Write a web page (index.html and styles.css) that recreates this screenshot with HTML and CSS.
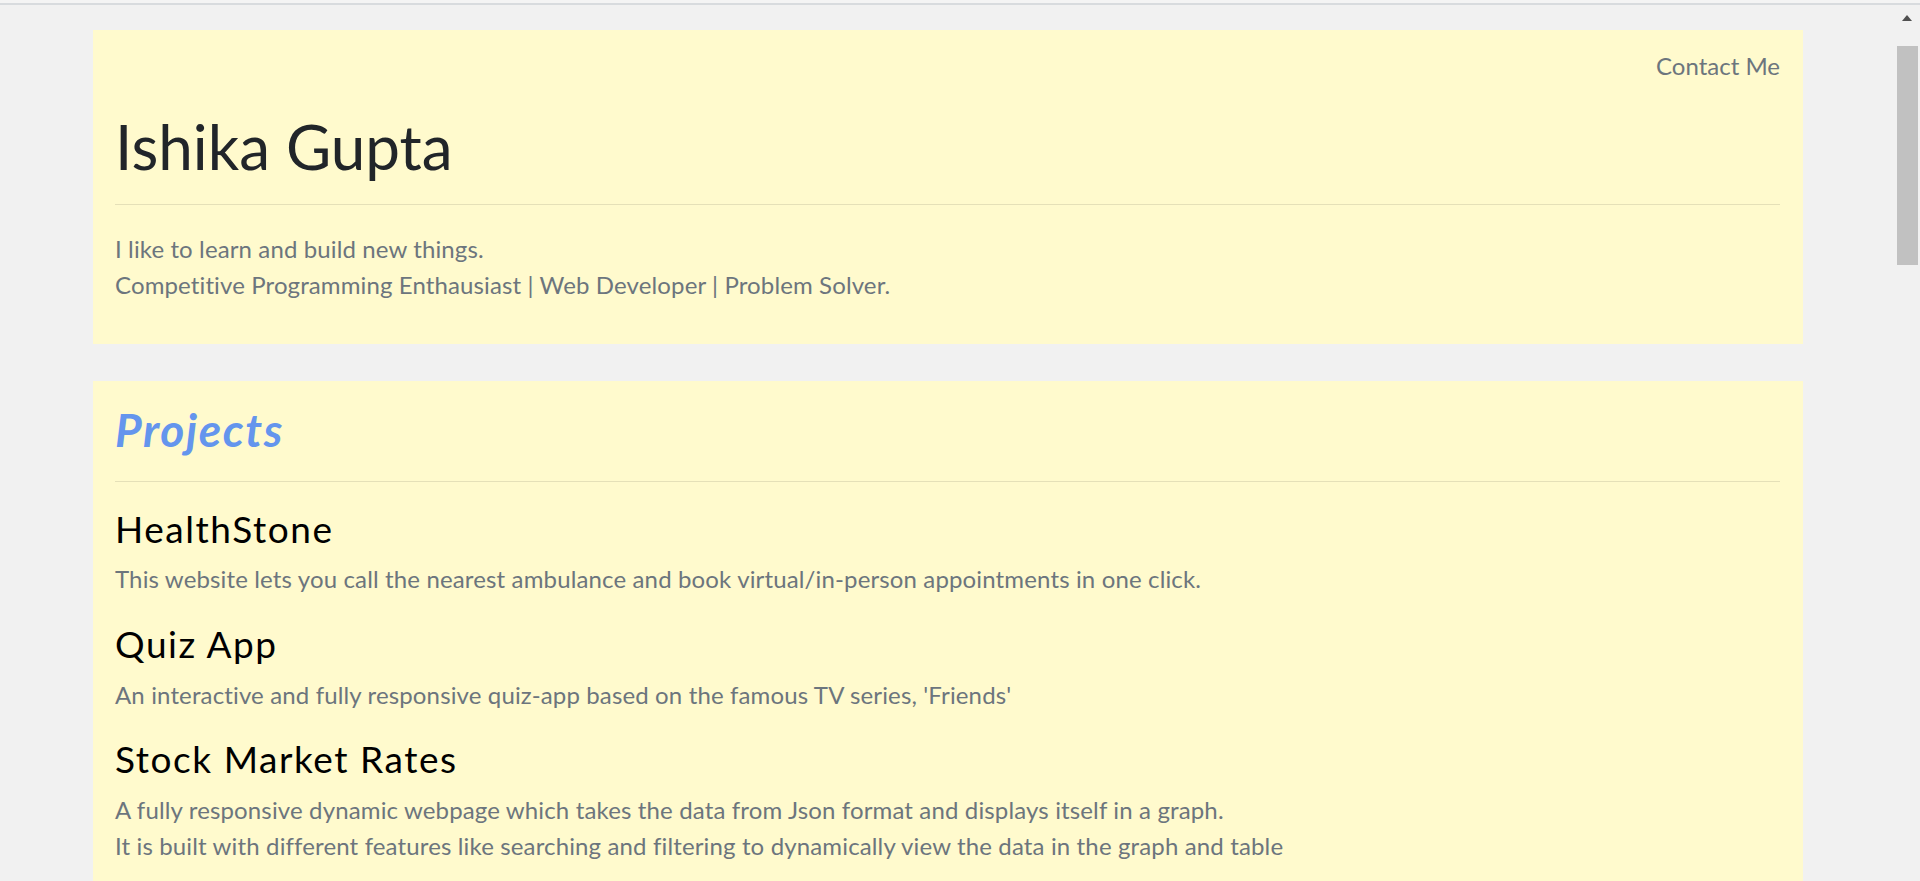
FILE: index.html
```html
<!DOCTYPE html>
<html lang="en">
<head>
<meta charset="utf-8">
<title>Ishika Gupta</title>
<link rel="stylesheet" href="styles.css">
</head>
<body>
<div class="topline"></div>
<main class="page">
  <header class="card intro">
    <nav class="nav"><a class="nav-link" href="#contact">Contact Me</a></nav>
    <h1 class="name">Ishika Gupta</h1>
    <hr class="rule">
    <p class="lead">I like to learn and build new things.<br>Competitive Programming Enthausiast | Web Developer | Problem Solver.</p>
  </header>
  <section class="card projects">
    <h2 class="section-title">Projects</h2>
    <hr class="rule rule-projects">
    <div class="project-list">
      <article class="project">
        <h3 class="project-title">HealthStone</h3>
        <p class="project-desc">This website lets you call the nearest ambulance and book virtual/in-person appointments in one click.</p>
      </article>
      <article class="project">
        <h3 class="project-title">Quiz App</h3>
        <p class="project-desc">An interactive and fully responsive quiz-app based on the famous TV series, 'Friends'</p>
      </article>
      <article class="project">
        <h3 class="project-title">Stock Market Rates</h3>
        <p class="project-desc">A fully responsive dynamic webpage which takes the data from Json format and displays itself in a graph.<br>It is built with different features like searching and filtering to dynamically view the data in the graph and table</p>
      </article>
    </div>
  </section>
</main>
<div class="scrollbar"><span class="scroll-arrow"></span><span class="scroll-thumb"></span></div>
</body>
</html>
```

FILE: styles.css
```css
html {
  scrollbar-width: none;
}
body {
  margin: 0;
  background: #f1f1f1;
  font-family: Lato, "Open Sans", sans-serif;
}
.topline {
  height: 3px;
  border-bottom: 2px solid #d8dbde;
  background: #f4f4f4;
}
.page {
  display: flex;
  flex-direction: column;
  gap: 37px;
  padding: 25px 0 40px 93px;
}
.card {
  width: 1710px;
  box-sizing: border-box;
  background: #fffacd;
  padding-left: 22px;
  padding-right: 23px;
}
.intro {
  padding-top: 18px;
  padding-bottom: 40.7px;
}
.nav {
  display: flex;
  justify-content: flex-end;
}
.nav-link {
  font-size: 24px;
  line-height: 36px;
  color: #6c757d;
  text-decoration: none;
}
.name {
  margin: 25.5px 0 0;
  font-size: 62px;
  line-height: 73.2px;
  font-weight: 400;
  color: #212529;
}
.rule {
  margin: 21px 0 0;
  border: 0;
  border-top: 1px solid rgba(0, 0, 0, 0.1);
  height: 0;
}
.lead {
  margin: 26.3px 0 0;
  font-size: 24px;
  line-height: 36px;
  letter-spacing: 0.12px;
  color: #6c757d;
}
.projects {
  padding-top: 22.6px;
  padding-bottom: 40px;
}
.section-title {
  margin: 0;
  font-size: 46px;
  line-height: 54px;
  font-weight: 700;
  font-style: italic;
  letter-spacing: 1.6px;
  color: #6495ed;
}
.rule-projects {
  margin-top: 23.4px;
}
.project-list {
  display: flex;
  flex-direction: column;
  gap: 24.5px;
  padding-top: 25px;
}
.project-title {
  margin: 0 0 11.5px;
  font-size: 37px;
  line-height: 43.2px;
  font-weight: 400;
  letter-spacing: 1.55px;
  color: #000;
}
.project-desc {
  margin: 0;
  font-size: 24px;
  line-height: 36px;
  letter-spacing: 0.14px;
  color: #6c757d;
}
.scrollbar {
  position: fixed;
  top: 5px;
  right: 0;
  bottom: 0;
  width: 25px;
  background: #f1f1f1;
}
.scroll-arrow {
  position: absolute;
  top: 10px;
  left: 7px;
  width: 0;
  height: 0;
  border-left: 5.5px solid transparent;
  border-right: 5.5px solid transparent;
  border-bottom: 6px solid #505050;
}
.scroll-thumb {
  position: absolute;
  top: 41px;
  left: 2px;
  width: 21px;
  height: 219px;
  background: #c1c1c1;
}
```
